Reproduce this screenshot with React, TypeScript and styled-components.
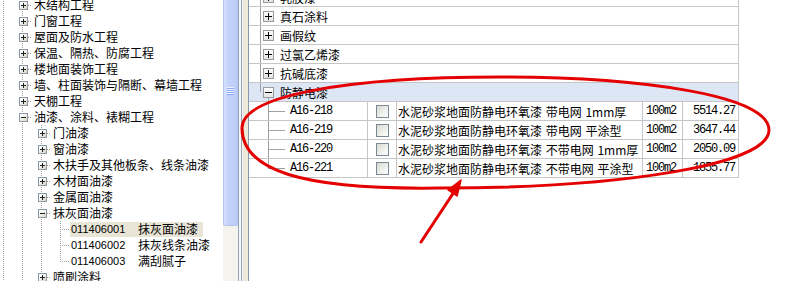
import React from 'react';
import styled, { createGlobalStyle } from 'styled-components';

const GlobalStyle = createGlobalStyle`
  html, body {
    margin: 0;
    padding: 0;
    background: #fff;
  }
  body {
    width: 810px;
    height: 281px;
    overflow: hidden;
    font-family: "Noto Sans CJK SC", "Liberation Sans", sans-serif;
    font-size: 12px;
    color: #000;
  }
`;

const CJK = `"Noto Sans CJK SC", "Liberation Sans", sans-serif`;
const MONO = `"Liberation Mono", "Noto Sans CJK SC", monospace`;
const DOT = '#a0a0a0';

// 점선 (트리 연결선)
const vDots = `repeating-linear-gradient(to bottom, ${DOT} 0 1px, transparent 1px 2px)`;
const hDots = `repeating-linear-gradient(to right, ${DOT} 0 1px, transparent 1px 2px)`;

const s = {
  Page: styled.div`
    position: relative;
    display: flex;
    width: 810px;
    height: 281px;
    overflow: hidden;
    background: #fff;
  `,
  TreePane: styled.div`
    width: 223px;
    flex: none;
    overflow: hidden;
    background: #fff;
  `,
  Tree: styled.div`
    margin: -3px 0 0 -6px;
  `,
  TreeRow: styled.div`
    display: flex;
    align-items: center;
    height: 16px;
  `,
  Guide: styled.span<{ $line: boolean }>`
    width: 19px;
    height: 16px;
    flex: none;
    background: ${(p) => (p.$line ? `${vDots} 9px 0 / 1px 16px no-repeat` : 'none')};
  `,
  Connector: styled.span<{ $last: boolean }>`
    width: 19px;
    height: 16px;
    flex: none;
    display: flex;
    align-items: center;
    justify-content: center;
    background:
      ${hDots} 9px 8px / 10px 1px no-repeat,
      ${vDots} 9px 0 / 1px ${(p) => (p.$last ? '9px' : '16px')} no-repeat;
  `,
  TreeBox: styled.span<{ $open: boolean }>`
    box-sizing: border-box;
    width: 9px;
    height: 9px;
    border: 1px solid #8c98a6;
    background:
      linear-gradient(#1e1e1e, #1e1e1e) center / 5px 1px no-repeat,
      ${(p) => (p.$open ? 'none' : 'linear-gradient(#1e1e1e, #1e1e1e) center / 1px 5px no-repeat')},
      linear-gradient(135deg, #ffffff 20%, #d6d3c6 100%);
    margin-left: 1px;
  `,
  TreeLabel: styled.span<{ $selected?: boolean; $leaf?: boolean }>`
    display: flex;
    align-items: center;
    height: 15px;
    margin-left: ${(p) => (p.$leaf ? '0' : '2px')};
    padding: ${(p) => (p.$leaf ? '0 5px 0 1px' : '0')};
    background: ${(p) => (p.$selected ? '#e8e4d6' : 'transparent')};
    font-family: ${CJK};
    font-size: 12px;
    line-height: 16px;
    white-space: nowrap;
  `,
  TreeCode: styled.span`
    width: 67px;
    font-family: "Liberation Sans", Arial, sans-serif;
    font-size: 11px;
  `,
  ScrollBar: styled.div`
    width: 15px;
    flex: none;
    display: flex;
    flex-direction: column;
    background: #f4f3ee;
  `,
  Thumb: styled.div`
    box-sizing: border-box;
    height: 226px;
    flex: none;
    display: flex;
    align-items: center;
    justify-content: center;
    padding-bottom: 44px;
    background: linear-gradient(to right, #d6e1fd 0%, #c4d3fb 30%, #bccdf9 100%);
    border: 1px solid #b2c3ef;
    border-top: none;
    border-radius: 0 0 2px 2px;
  `,
  Grip: styled.div`
    width: 7px;
    height: 8px;
    background: repeating-linear-gradient(to bottom, #eef3ff 0 1px, #8eaaf0 1px 2px);
  `,
  Splitter: styled.div`
    width: 11px;
    flex: none;
    background: linear-gradient(
      to right,
      #94a6c2 0 1px,
      #f6f6f4 1px 3px,
      #94a6c2 3px 4px,
      #f3f2ec 4px 5px,
      #ece9d8 5px 10px,
      #8797ae 10px 11px
    );
  `,
  GridPane: styled.div`
    flex: 1;
    overflow: hidden;
    background: #fff;
  `,
  Grid: styled.div`
    width: 490px;
    margin-top: -12px;
  `,
  GroupRow: styled.div<{ $open?: boolean; $lastRoot?: boolean }>`
    box-sizing: border-box;
    display: flex;
    align-items: center;
    height: 19px;
    padding-left: 14px;
    border-bottom: 1px solid #c6c6c6;
    border-right: 1px solid #c6c6c6;
    background:
      linear-gradient(${DOT}, ${DOT}) 11px 0 / 1px ${(p) => (p.$lastRoot ? '9px' : '100%')} no-repeat,
      ${(p) => (p.$open ? `linear-gradient(${DOT}, ${DOT}) 19px 14px / 1px 5px no-repeat,` : '')}
      ${(p) => (p.$open ? '#dde6f4' : '#fff')};
  `,
  GroupBox: styled.span<{ $open: boolean }>`
    box-sizing: border-box;
    width: 11px;
    height: 11px;
    flex: none;
    border: 1px solid #9a9a9a;
    background:
      linear-gradient(#000, #000) center / 7px 1px no-repeat,
      ${(p) => (p.$open ? 'none' : 'linear-gradient(#000, #000) center / 1px 7px no-repeat')},
      linear-gradient(to bottom, #ffffff, #e4e4e4);
  `,
  GroupLabel: styled.span`
    margin-left: 6px;
    font-family: ${CJK};
    font-size: 12px;
    white-space: nowrap;
  `,
  DataRow: styled.div`
    display: flex;
    height: 19px;
  `,
  Cell: styled.div<{ $w: number; $align?: 'left' | 'right' | 'center'; $pad?: number }>`
    box-sizing: border-box;
    width: ${(p) => p.$w}px;
    flex: none;
    display: flex;
    align-items: center;
    justify-content: ${(p) => (p.$align === 'right' ? 'flex-end' : p.$align === 'center' ? 'center' : 'flex-start')};
    padding: 0 ${(p) => p.$pad ?? 0}px;
    border-right: 1px solid #c6c6c6;
    border-bottom: 1px solid #c6c6c6;
    white-space: nowrap;
    overflow: hidden;
  `,
  CodeCell: styled.div<{ $last: boolean }>`
    box-sizing: border-box;
    width: 119px;
    flex: none;
    display: flex;
    align-items: center;
    padding-left: 41px;
    border-right: 1px solid #c6c6c6;
    border-bottom: 1px solid #c6c6c6;
    background:
      linear-gradient(${DOT}, ${DOT}) 19px 9px / 17px 1px no-repeat,
      linear-gradient(${DOT}, ${DOT}) 19px 0 / 1px ${(p) => (p.$last ? '10px' : '100%')} no-repeat;
  `,
  Mono: styled.span`
    font-family: ${MONO};
    font-size: 12px;
    letter-spacing: -1.2px;
  `,
  Name: styled.span`
    padding-left: 1px;
    font-family: ${CJK};
    font-size: 12px;
    word-spacing: 1px;
  `,
  CheckBox: styled.span`
    box-sizing: border-box;
    width: 13px;
    height: 13px;
    border: 1px solid #7c8894;
    background: linear-gradient(135deg, #d9d9d2 0%, #f1f1ee 60%, #ffffff 100%);
  `,
  Overlay: styled.svg`
    position: absolute;
    left: 0;
    top: 0;
    pointer-events: none;
  `,
};

interface TreeItem {
  level: 1 | 2 | 3;
  label: string;
  code?: string;
  open?: boolean;
  last?: boolean;
  selected?: boolean;
}

const tree: TreeItem[] = [
  { level: 1, label: '木结构工程' },
  { level: 1, label: '门窗工程' },
  { level: 1, label: '屋面及防水工程' },
  { level: 1, label: '保温、隔热、防腐工程' },
  { level: 1, label: '楼地面装饰工程' },
  { level: 1, label: '墙、柱面装饰与隔断、幕墙工程' },
  { level: 1, label: '天棚工程' },
  { level: 1, label: '油漆、涂料、裱糊工程', open: true },
  { level: 2, label: '门油漆' },
  { level: 2, label: '窗油漆' },
  { level: 2, label: '木扶手及其他板条、线条油漆' },
  { level: 2, label: '木材面油漆' },
  { level: 2, label: '金属面油漆' },
  { level: 2, label: '抹灰面油漆', open: true },
  { level: 3, code: '011406001', label: '抹灰面油漆', selected: true },
  { level: 3, code: '011406002', label: '抹灰线条油漆' },
  { level: 3, code: '011406003', label: '满刮腻子', last: true },
  { level: 2, label: '喷刷涂料' },
];

const groups = ['乳胶漆', '真石涂料', '画假纹', '过氯乙烯漆', '抗碱底漆'];

const items = [
  ['A16-218', '水泥砂浆地面防静电环氧漆 带电网 1mm厚', '100m2', '5514.27'],
  ['A16-219', '水泥砂浆地面防静电环氧漆 带电网 平涂型', '100m2', '3647.44'],
  ['A16-220', '水泥砂浆地面防静电环氧漆 不带电网 1mm厚', '100m2', '2050.09'],
  ['A16-221', '水泥砂浆地面防静电环氧漆 不带电网 平涂型', '100m2', '1855.77'],
];

// 트리 한 줄
const TreeLine: React.FC<{ item: TreeItem }> = ({ item }) => {
  const guides = Array.from({ length: item.level }, (_, i) => i);
  const leaf = item.level === 3;
  return (
    <s.TreeRow>
      {guides.map((g) => (
        <s.Guide key={g} $line />
      ))}
      <s.Connector $last={!!item.last}>{!leaf && <s.TreeBox $open={!!item.open} />}</s.Connector>
      <s.TreeLabel $selected={item.selected} $leaf={leaf}>
        {item.code && <s.TreeCode children={item.code} />}
        {item.label}
      </s.TreeLabel>
    </s.TreeRow>
  );
};

const Annotation: React.FC = () => (
  <s.Overlay width="810" height="281" viewBox="0 0 810 281">
    <path
      d="M242 128 C242 95 350 77 500 77 C640 77 769 95 769 130 C769 165 620 188 440 188 C300 190 242 170 242 128 Z"
      fill="none"
      stroke="#e40000"
      strokeWidth="3"
    />
    <line x1="421" y1="242" x2="454" y2="192" stroke="#e40000" strokeWidth="3" strokeLinecap="round" />
    <polygon points="461,180 457,196 448,190" fill="#e40000" stroke="#e40000" strokeWidth="1.5" strokeLinejoin="round" />
  </s.Overlay>
);

const App: React.FC = () => {
  return (
    <s.Page>
      <GlobalStyle />
      <s.TreePane>
        <s.Tree>
          {tree.map((item, i) => (
            <TreeLine key={i} item={item} />
          ))}
        </s.Tree>
      </s.TreePane>
      <s.ScrollBar>
        <s.Thumb>
          <s.Grip />
        </s.Thumb>
      </s.ScrollBar>
      <s.Splitter />
      <s.GridPane>
        <s.Grid>
          {groups.map((g) => (
            <s.GroupRow key={g}>
              <s.GroupBox $open={false} />
              <s.GroupLabel children={g} />
            </s.GroupRow>
          ))}
          <s.GroupRow $open $lastRoot>
            <s.GroupBox $open />
            <s.GroupLabel children="防静电漆" />
          </s.GroupRow>
          {items.map(([code, name, unit, price], i) => (
            <s.DataRow key={code}>
              <s.CodeCell $last={i === items.length - 1}>
                <s.Mono children={code} />
              </s.CodeCell>
              <s.Cell $w={29} $align="center">
                <s.CheckBox />
              </s.Cell>
              <s.Cell $w={246}>
                <s.Name children={name} />
              </s.Cell>
              <s.Cell $w={40} $pad={3}>
                <s.Mono children={unit} />
              </s.Cell>
              <s.Cell $w={56} $align="right" $pad={3}>
                <s.Mono children={price} />
              </s.Cell>
            </s.DataRow>
          ))}
        </s.Grid>
      </s.GridPane>
      <Annotation />
    </s.Page>
  );
};

export default App;
